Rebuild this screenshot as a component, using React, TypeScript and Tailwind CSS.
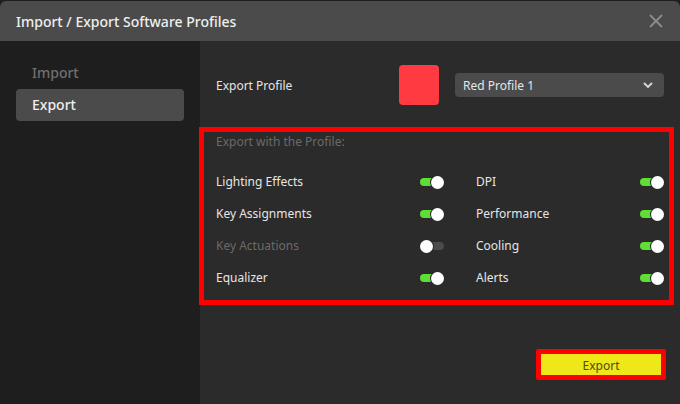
import React from "react";

function Toggle({ on }: { on: boolean }) {
  return (
    <div className={`flex h-[8px] w-[24px] items-center rounded-full ${on ? "justify-end bg-[#5fdc37]" : "justify-start bg-[#4b4b4b]"}`}>
      <div className="h-[13px] w-[13px] shrink-0 rounded-full bg-white ring-1 ring-[#2b2b2b]" />
    </div>
  );
}

function Row({ label, on = true }: { label: string; on?: boolean }) {
  return (
    <div className="flex h-[32px] items-center justify-between">
      <span className={on ? "text-[#e6e6e6]" : "text-[#6a6a6a]"}>{label}</span>
      <Toggle on={on} />
    </div>
  );
}

export default function App() {
  return (
    <div className="flex h-[404px] w-[680px] flex-col overflow-hidden bg-[#1e1e1e] pt-px text-[12px] font-['Noto_Sans',sans-serif]">
      <div className="flex h-[40px] shrink-0 items-center justify-between rounded-t-[6px] bg-[#4b4b4b] pl-4 pr-[17px]">
        <span className="text-[14px] font-medium text-[#efefef]">Import / Export Software Profiles</span>
        <svg width="14" height="14" viewBox="0 0 14 14" fill="none" stroke="#8c8c8c" strokeWidth="1.8">
          <path d="M1 1l12 12M13 1L1 13" />
        </svg>
      </div>
      <div className="flex min-h-0 flex-1">
        <aside className="flex w-[200px] shrink-0 flex-col bg-[#1e1e1e] px-4 pt-4">
          <div className="flex h-[32px] items-center px-4 pb-[2px] text-[14px] font-medium text-[#707070]">Import</div>
          <div className="flex h-[32px] items-center rounded-[4px] bg-[#4b4b4b] px-4 pb-[2px] text-[14px] font-medium text-[#f0f0f0]">Export</div>
        </aside>
        <main className="flex flex-1 flex-col bg-[#2b2b2b]">
          <div className="mt-[24px] flex h-[40px] items-center pl-4 pr-4">
            <span className="w-[183px] pt-[2px] text-[#e6e6e6]">Export Profile</span>
            <div className="h-[40px] w-[40px] rounded-[4px] bg-[#ff3b41]" />
            <div className="ml-4 flex h-[24px] flex-1 items-center justify-between rounded-[4px] bg-[#4b4b4b] pl-2 pr-[11px] text-[#e6e6e6]">
              <span className="pt-[2px]">Red Profile 1</span>
              <svg width="10" height="7" viewBox="0 0 10 7" fill="none" stroke="#d8d8d8" strokeWidth="1.8">
                <path d="M1 1l4 4 4-4" />
              </svg>
            </div>
          </div>
          <section className="-ml-px mt-[22px] mr-[6px] h-[178px] border-[5px] border-[#ff0000] pl-[12px] pr-[5px] pt-[3px]">
            <div className="flex h-[14px] items-center text-[#6a6a6a]">Export with the Profile:</div>
            <div className="mt-[17px] grid grid-cols-[228px_1fr] gap-x-[32px]">
              <div className="flex flex-col">
                <Row label="Lighting Effects" />
                <Row label="Key Assignments" />
                <Row label="Key Actuations" on={false} />
                <Row label="Equalizer" />
              </div>
              <div className="flex flex-col">
                <Row label="DPI" />
                <Row label="Performance" />
                <Row label="Cooling" />
                <Row label="Alerts" />
              </div>
            </div>
          </section>
          <div className="mt-[44px] flex justify-end pr-[14px]">
            <button className="h-[31px] w-[130px] rounded-[2px] border-[5px] border-[#ff0000] bg-[#eee819] pt-[2px] text-[#4b4b1e]">Export</button>
          </div>
        </main>
      </div>
    </div>
  );
}
